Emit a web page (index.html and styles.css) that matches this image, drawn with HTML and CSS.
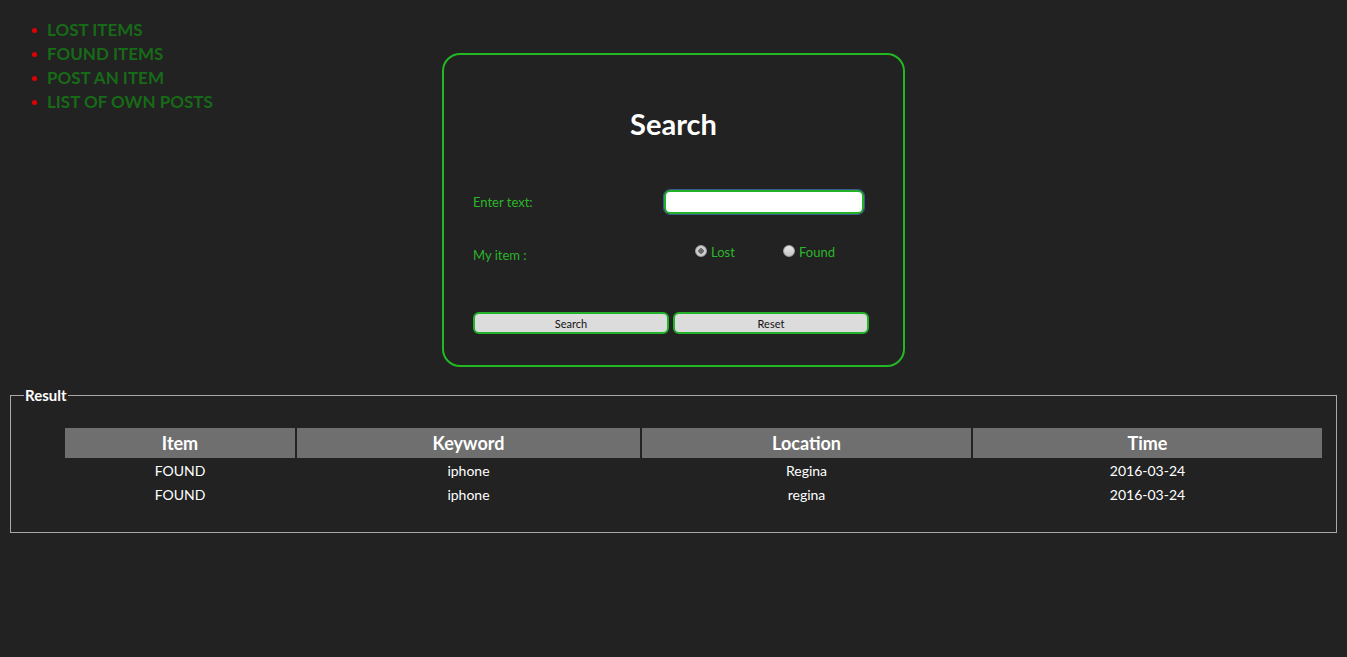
FILE: index.html
```html
<!DOCTYPE html>
<html>
<head>
<meta charset="utf-8">
<link rel="stylesheet" href="styles.css">
</head>
<body>
<div class="top">
  <ul class="nav">
    <li><a href="#">LOST ITEMS</a></li>
    <li><a href="#">FOUND ITEMS</a></li>
    <li><a href="#">POST AN ITEM</a></li>
    <li><a href="#">LIST OF OWN POSTS</a></li>
  </ul>
  <form class="box">
    <h1 class="title">Search</h1>
    <div class="row row-text">
      <label class="lbl">Enter text:</label>
      <div class="field"><input class="txt" type="text"></div>
    </div>
    <div class="row row-radio">
      <label class="lbl">My item :</label>
      <div class="field radios">
        <label class="opt"><input type="radio" name="it" checked><span>Lost</span></label>
        <label class="opt"><input type="radio" name="it"><span>Found</span></label>
      </div>
    </div>
    <div class="btns">
      <button type="button" class="btn">Search</button>
      <button type="button" class="btn">Reset</button>
    </div>
  </form>
  <div class="spacer"></div>
</div>
<fieldset class="result">
  <legend>Result</legend>
  <table class="tbl">
    <thead>
      <tr><th class="c1">Item</th><th class="c2">Keyword</th><th class="c3">Location</th><th class="c4">Time</th></tr>
    </thead>
    <tbody>
      <tr><td>FOUND</td><td>iphone</td><td>Regina</td><td>2016-03-24</td></tr>
      <tr><td>FOUND</td><td>iphone</td><td>regina</td><td>2016-03-24</td></tr>
    </tbody>
  </table>
</fieldset>
</body>
</html>
```
FILE: styles.css
```css
html, body {
  margin: 0;
  padding: 0;
  background: #222222;
  font-family: Lato, "Open Sans", sans-serif;
}
body {
  padding: 8px 10px;
}
.top {
  display: grid;
  grid-template-columns: 1fr auto 1fr;
  align-items: start;
}
.nav {
  margin: 10px 0 0 0;
  padding: 0 0 0 37px;
  list-style: none;
}
.nav li {
  position: relative;
  height: 24px;
  line-height: 24px;
  font-size: 17px;
  font-weight: bold;
}
.nav li::before {
  content: "";
  position: absolute;
  left: -15px;
  top: 10px;
  width: 5px;
  height: 5px;
  border-radius: 50%;
  background: #e00000;
}
.nav a {
  color: #176a17;
  text-decoration: none;
}
.box {
  width: 459px;
  height: 310px;
  margin: 45px 0 0;
  border: 2px solid #23b823;
  border-radius: 18px;
  box-sizing: content-box;
  padding: 0;
  display: flex;
  flex-direction: column;
}
.title {
  margin: 51px 0 0;
  text-align: center;
  color: #ffffff;
  font-size: 29px;
  font-weight: bold;
  line-height: 36px;
}
.row {
  display: flex;
  align-items: center;
  padding-left: 29px;
}
.row-text {
  margin-top: 47px;
  height: 26px;
}
.row-radio {
  margin-top: 26px;
  height: 20px;
}
.lbl {
  width: 191px;
  color: #2bb52b;
  font-size: 13px;
}
.row-radio .lbl {
  padding-top: 8px;
}
.txt {
  width: 200px;
  height: 24px;
  box-sizing: border-box;
  border: 2px solid #22b22a;
  border-radius: 6px;
  outline: 1px solid #3a5a8a;
  outline-offset: 0;
  background: #ffffff;
  margin: 0;
}
.radios {
  display: flex;
  padding-left: 31px;
}
.opt {
  display: flex;
  align-items: center;
  color: #2bb52b;
  font-size: 13px;
  width: 88px;
}
.opt span {
  padding-top: 2px;
}
.opt input {
  appearance: none;
  -webkit-appearance: none;
  margin: 0 4px 0 0;
  width: 12px;
  height: 12px;
  border-radius: 50%;
  border: 1px solid #a0a0a0;
  background: linear-gradient(#e8e8e8, #c4c4c4);
  box-sizing: border-box;
}
.opt input:checked {
  background: radial-gradient(circle, #6a6a6a 0 2.5px, #cfcfcf 3px);
}
.btns {
  display: flex;
  gap: 4px;
  padding-left: 29px;
  margin-top: 51px;
}
.btn {
  width: 196px;
  height: 22px;
  background: #dcdcdc;
  border: 2px solid #22b22a;
  border-radius: 6px;
  font-family: Lato, sans-serif;
  font-size: 11px;
  color: #111;
  padding: 0;
}
.result {
  margin: 19px 0 0 0;
  border: 1px solid #a8a8a8;
  padding: 24px 14px 26px 54px;
}
.result legend {
  color: #ffffff;
  font-weight: bold;
  font-size: 15px;
  padding: 0 1px;
  margin-left: -41px;
}
.tbl {
  border-spacing: 2px 0;
  margin: 0 -2px;
  width: calc(100% + 4px);
  color: #ffffff;
}
.tbl th {
  background: #6f6f6f;
  height: 30px;
  font-size: 18px;
  font-weight: bold;
  padding: 0;
}
.tbl td {
  text-align: center;
  font-size: 14px;
  height: 24px;
  padding: 0;
}
.c1 { width: 230px; }
.c2 { width: 343px; }
.c3 { width: 329px; }
```
